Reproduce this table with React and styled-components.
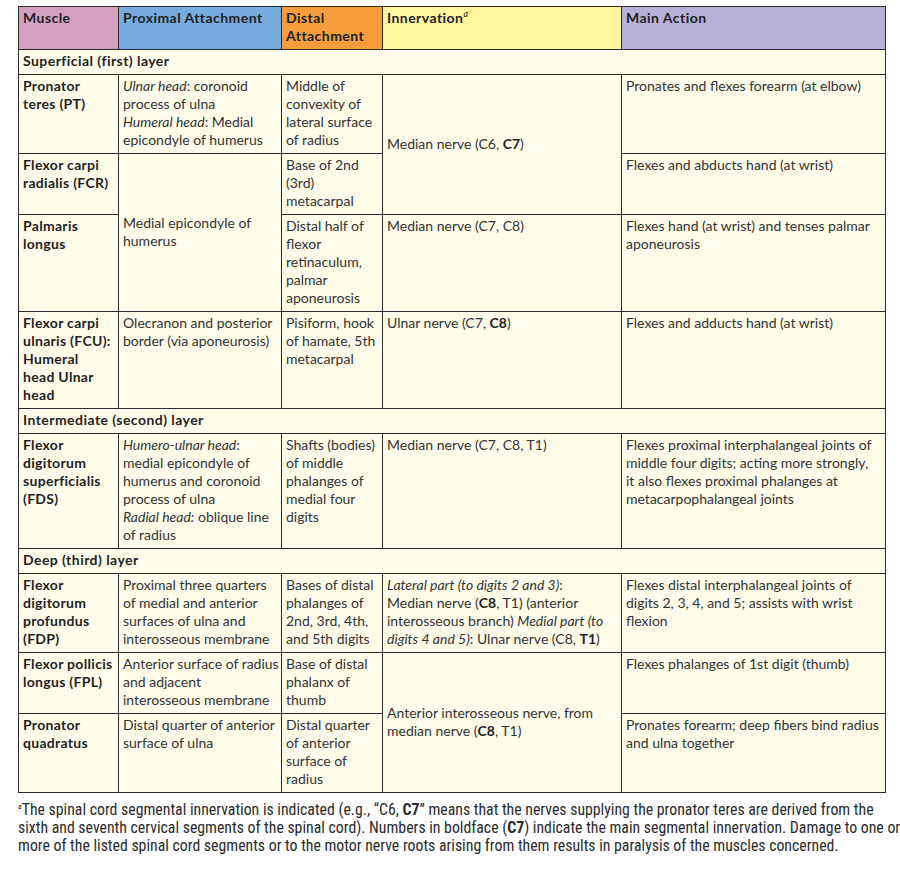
import React from "react";
import styled, { createGlobalStyle } from "styled-components";

const GlobalStyle = createGlobalStyle`
  body {
    margin: 0;
    background: #ffffff;
  }
`;

const Page = styled.div`
  width: 900px;
  padding: 6px 16px 0 18px;
  box-sizing: border-box;
  font-family: "Lato", "Open Sans", sans-serif;
  color: #2b2b2b;
`;

const Table = styled.table`
  width: 867px;
  border-collapse: collapse;
  table-layout: fixed;
  font-size: 14px;
  line-height: 18px;
`;

const HeadCell = styled.th`
  background: ${(p) => p.$bg};
  border: 1px solid #2a2a2a;
  padding: 2px 4px 4px;
  text-align: left;
  vertical-align: top;
  font-weight: 700;
  letter-spacing: 0.45px;
  white-space: nowrap;
  color: #1f1f1f;
`;

const LayerCell = styled.td`
  background: #fffcea;
  border: 1px solid #2a2a2a;
  padding: 2px 4px 4px;
  font-weight: 700;
  letter-spacing: 0.45px;
  color: #1f1f1f;
`;

const Cell = styled.td`
  background: #fffcea;
  border: 1px solid #2a2a2a;
  padding: 2px 4px 4px;
  white-space: nowrap;
  vertical-align: ${(p) => (p.$middle ? "middle" : "top")};
  font-weight: ${(p) => (p.$bold ? 700 : 400)};
  letter-spacing: ${(p) => (p.$bold ? "0.3px" : "0")};
  color: ${(p) => (p.$bold ? "#1f1f1f" : "#333")};
  b {
    color: #1f1f1f;
  }
`;

const Sup = styled.sup`
  font-style: italic;
  font-weight: 400;
  font-size: 9px;
  line-height: 0;
`;

const Footnote = styled.p`
  margin: 8px 0 0;
  white-space: nowrap;
  font-family: "Liberation Sans Narrow", "Roboto Condensed", "DejaVu Sans Condensed", sans-serif;
  font-size: 15.8px;
  line-height: 18px;
  color: #2b2b2b;
`;

const FootSup = styled.sup`
  font-size: 8px;
  font-style: italic;
  line-height: 0;
`;

const headers = [
  { label: "Muscle", bg: "#d59fc0", w: 100 },
  { label: "Proximal Attachment", bg: "#77abdd", w: 163 },
  { label: <>Distal<br />Attachment</>, bg: "#f69d3c", w: 101 },
  { label: "Innervation", bg: "#fff59e", w: 239, sup: true },
  { label: "Main Action", bg: "#b7b1d9", w: 264 },
];

const Layer = ({ children }) => (
  <tr>
    <LayerCell colSpan={5}>{children}</LayerCell>
  </tr>
);

const App = () => {
  return (
    <Page>
      <GlobalStyle />
      <Table>
        <colgroup>
          {headers.map((h, i) => (
            <col key={i} style={{ width: h.w }} />
          ))}
        </colgroup>
        <thead>
          <tr>
            {headers.map((h, i) => (
              <HeadCell key={i} $bg={h.bg}>
                {h.label}
                {h.sup && <Sup>a</Sup>}
              </HeadCell>
            ))}
          </tr>
        </thead>
        <tbody>
          <Layer>Superficial (first) layer</Layer>
          <tr>
            <Cell $bold>Pronator<br />teres (PT)</Cell>
            <Cell>
              <i>Ulnar head</i>: coronoid<br />process of ulna<br />
              <i>Humeral head</i>: Medial<br />epicondyle of humerus
            </Cell>
            <Cell>Middle of<br />convexity of<br />lateral surface<br />of radius</Cell>
            <Cell rowSpan={2} $middle>
              Median nerve (C6, <b>C7</b>)
            </Cell>
            <Cell>Pronates and flexes forearm (at elbow)</Cell>
          </tr>
          <tr>
            <Cell $bold>Flexor carpi<br />radialis (FCR)</Cell>
            <Cell rowSpan={2} $middle>
              Medial epicondyle of<br />humerus
            </Cell>
            <Cell>Base of 2nd<br />(3rd)<br />metacarpal</Cell>
            <Cell>Flexes and abducts hand (at wrist)</Cell>
          </tr>
          <tr>
            <Cell $bold>Palmaris<br />longus</Cell>
            <Cell>Distal half of<br />flexor<br />retinaculum,<br />palmar<br />aponeurosis</Cell>
            <Cell>Median nerve (C7, C8)</Cell>
            <Cell>Flexes hand (at wrist) and tenses palmar<br />aponeurosis</Cell>
          </tr>
          <tr>
            <Cell $bold>Flexor carpi<br />ulnaris (FCU):<br />Humeral<br />head Ulnar<br />head</Cell>
            <Cell>Olecranon and posterior<br />border (via aponeurosis)</Cell>
            <Cell>Pisiform, hook<br />of hamate, 5th<br />metacarpal</Cell>
            <Cell>
              Ulnar nerve (C7, <b>C8</b>)
            </Cell>
            <Cell>Flexes and adducts hand (at wrist)</Cell>
          </tr>
          <Layer>Intermediate (second) layer</Layer>
          <tr>
            <Cell $bold>Flexor<br />digitorum<br />superficialis<br />(FDS)</Cell>
            <Cell>
              <i>Humero-ulnar head</i>:<br />medial epicondyle of<br />humerus and coronoid<br />
              process of ulna<br />
              <i>Radial head:</i> oblique line<br />of radius
            </Cell>
            <Cell>Shafts (bodies)<br />of middle<br />phalanges of<br />medial four<br />digits</Cell>
            <Cell>Median nerve (C7, C8, T1)</Cell>
            <Cell>
              Flexes proximal interphalangeal joints of<br />middle four digits; acting more strongly,<br />
              it also flexes proximal phalanges at<br />metacarpophalangeal joints
            </Cell>
          </tr>
          <Layer>Deep (third) layer</Layer>
          <tr>
            <Cell $bold>Flexor<br />digitorum<br />profundus<br />(FDP)</Cell>
            <Cell>
              Proximal three quarters<br />of medial and anterior<br />surfaces of ulna and<br />
              interosseous membrane
            </Cell>
            <Cell>Bases of distal<br />phalanges of<br />2nd, 3rd, 4th,<br />and 5th digits</Cell>
            <Cell>
              <i>Lateral part (to digits 2 and 3)</i>:<br />
              Median nerve (<b>C8</b>, T1) (anterior<br />
              interosseous branch) <i>Medial part (to</i>
              <br />
              <i>digits 4 and 5)</i>: Ulnar nerve (C8, <b>T1</b>)
            </Cell>
            <Cell>
              Flexes distal interphalangeal joints of<br />digits 2, 3, 4, and 5; assists with wrist<br />
              flexion
            </Cell>
          </tr>
          <tr>
            <Cell $bold>Flexor pollicis<br />longus (FPL)</Cell>
            <Cell>Anterior surface of radius<br />and adjacent<br />interosseous membrane</Cell>
            <Cell>Base of distal<br />phalanx of<br />thumb</Cell>
            <Cell rowSpan={2} $middle>
              Anterior interosseous nerve, from<br />median nerve (<b>C8</b>, T1)
            </Cell>
            <Cell>Flexes phalanges of 1st digit (thumb)</Cell>
          </tr>
          <tr>
            <Cell $bold>Pronator<br />quadratus</Cell>
            <Cell>Distal quarter of anterior<br />surface of ulna</Cell>
            <Cell>Distal quarter<br />of anterior<br />surface of<br />radius</Cell>
            <Cell>Pronates forearm; deep fibers bind radius<br />and ulna together</Cell>
          </tr>
        </tbody>
      </Table>
      <Footnote>
        <FootSup>a</FootSup>The spinal cord segmental innervation is indicated (e.g., “C6, <b>C7</b>”
        means that the nerves supplying the pronator teres are derived from the
        <br />
        sixth and seventh cervical segments of the spinal cord). Numbers in boldface (<b>C7</b>)
        indicate the main segmental innervation. Damage to one or
        <br />
        more of the listed spinal cord segments or to the motor nerve roots arising from them results
        in paralysis of the muscles concerned.
      </Footnote>
    </Page>
  );
};

export default App;
